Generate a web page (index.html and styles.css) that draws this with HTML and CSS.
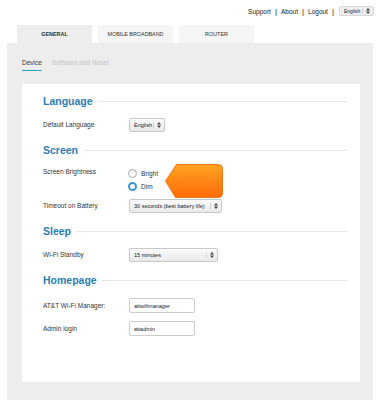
FILE: index.html
```html
<!DOCTYPE html>
<html>

<head>
  <meta charset="utf-8" />
  <title>Settings - General</title>
  <link rel="stylesheet" href="styles.css">
</head>

<body>
  <div class="top-links">
    <a href="#">Support</a><span class="sep">|</span>
    <a href="#">About</a><span class="sep">|</span>
    <a href="#">Logout</a><span class="sep">|</span>
    <span class="select lang-select">English
      <svg class="arrows" width="4" height="6" viewBox="0 0 4 6"><path d="M2 0L4 2.4H0z M2 6L4 3.6H0z" fill="#444"/></svg>
    </span>
  </div>

  <div class="tabs">
    <a class="tab active" href="#">GENERAL</a>
    <a class="tab" href="#">MOBILE BROADBAND</a>
    <a class="tab" href="#">ROUTER</a>
  </div>

  <div class="panel">
    <div class="subnav">
      <a class="subtab active" href="#">Device</a>
      <a class="subtab" href="#">Software and Reset</a>
    </div>

    <div class="card">
      <div class="section">
        <h2 class="section-title">Language</h2>
        <div class="row">
          <span class="label">Default Language</span>
          <span class="select w-lang">English
            <svg class="arrows" width="4" height="6" viewBox="0 0 4 6"><path d="M2 0L4 2.4H0z M2 6L4 3.6H0z" fill="#444"/></svg>
          </span>
        </div>
      </div>

      <div class="section">
        <h2 class="section-title">Screen</h2>
        <div class="row top">
          <span class="label">Screen Brightness</span>
          <div class="radios">
            <label class="radio"><span class="dot"></span>Bright</label>
            <label class="radio"><span class="dot on"></span>Dim</label>
          </div>
        </div>
        <div class="row tight">
          <span class="label">Timeout on Battery</span>
          <span class="select w-timeout">30 seconds (best battery life)
            <svg class="arrows" width="4" height="6" viewBox="0 0 4 6"><path d="M2 0L4 2.4H0z M2 6L4 3.6H0z" fill="#444"/></svg>
          </span>
        </div>
      </div>

      <div class="section">
        <h2 class="section-title">Sleep</h2>
        <div class="row">
          <span class="label">Wi-Fi Standby</span>
          <span class="select w-standby">15 minutes
            <svg class="arrows" width="4" height="6" viewBox="0 0 4 6"><path d="M2 0L4 2.4H0z M2 6L4 3.6H0z" fill="#444"/></svg>
          </span>
        </div>
      </div>

      <div class="section">
        <h2 class="section-title">Homepage</h2>
        <div class="row field">
          <span class="label">AT&amp;T Wi-Fi Manager:</span>
          <input class="text-input" type="text" value="attwifimanager">
        </div>
        <div class="row field">
          <span class="label">Admin login</span>
          <input class="text-input" type="text" value="attadmin">
        </div>
      </div>

      <svg class="pointer-tag" width="58" height="34" viewBox="0 0 58 34">
        <defs>
          <linearGradient id="tagfill" x1="0" y1="0" x2="0" y2="1">
            <stop offset="0" stop-color="#ffa424" />
            <stop offset="1" stop-color="#ff6a06" />
          </linearGradient>
        </defs>
        <path d="M11.5 0.5H53.5Q57.5 0.5 57.5 4.5V29.5Q57.5 33.5 53.5 33.5H10.5L0.5 17Z" fill="url(#tagfill)" stroke="#f07a1a" stroke-width="1" stroke-linejoin="round"/>
      </svg>
    </div>
  </div>
</body>

</html>
```

FILE: styles.css
```css
body {
  margin: 0;
  padding: 0;
  background-color: #ffffff;
  font-family: "Liberation Sans", Arial, sans-serif;
  color: #333333;
}

a {
  text-decoration: none;
  color: inherit;
}

.top-links {
  display: flex;
  justify-content: flex-end;
  align-items: center;
  height: 22px;
  padding-right: 6px;
  font-size: 6.5px;
  color: #222222;
}

.top-links .sep {
  margin: 0 4px;
  font-size: 8px;
}

.select {
  display: inline-flex;
  align-items: center;
  justify-content: space-between;
  box-sizing: border-box;
  height: 14px;
  padding: 0 3px 0 4px;
  border: 1px solid #c9c9c9;
  border-radius: 2px;
  background: linear-gradient(#fbfbfb, #e9e9e9);
  font-size: 5.5px;
  color: #222222;
  white-space: nowrap;
}

.select .arrows {
  padding-left: 3px;
  border-left: 1px solid #d6d6d6;
}

.lang-select {
  width: 35px;
  height: 10px;
  margin-left: 1px;
  font-size: 5px;
  background: #eeeeee;
  border-color: #d8d8d8;
}

.tabs {
  display: flex;
  gap: 6px;
  margin: 3px 0 0 17px;
}

.tab {
  display: flex;
  align-items: center;
  justify-content: center;
  width: 75px;
  height: 18px;
  background-color: #f5f5f5;
  font-size: 5.4px;
  color: #333333;
}

.tab.active {
  background-color: #ededed;
  font-weight: bold;
}

.panel {
  margin: 0 7px;
  height: 357px;
  background-color: #ededed;
  overflow: hidden;
}

.subnav {
  display: flex;
  gap: 10px;
  padding: 15px 15px 0;
  height: 13px;
}

.subtab {
  line-height: 10px;
  height: 10px;
  padding-bottom: 2px;
  font-size: 6.5px;
  color: #c4c4c4;
}

.subtab.active {
  color: #3a3a3a;
  border-bottom: 1px solid #2fa2bb;
}

.card {
  position: relative;
  box-sizing: border-box;
  height: 298px;
  margin: 13px 13px 0 15px;
  padding: 7px 13px 0 21px;
  background-color: #ffffff;
}

.section + .section {
  margin-top: 8px;
}

.section-title {
  display: flex;
  align-items: center;
  gap: 5px;
  height: 20px;
  margin: 0;
  font-size: 10.5px;
  font-weight: bold;
  color: #2a7db5;
}

.section-title::after {
  content: "";
  flex: 1;
  height: 1px;
  background-color: #e6e6e6;
}

.row {
  display: flex;
  align-items: center;
  margin-top: 7px;
}

.row.top {
  align-items: flex-start;
}

.row.tight {
  margin-top: 6px;
}

.row.field {
  margin-top: 8px;
}

.label {
  width: 86px;
  flex-shrink: 0;
  font-size: 6.5px;
  line-height: 10px;
  color: #333333;
}

.w-lang {
  width: 36px;
}

.w-timeout {
  width: 93px;
}

.w-standby {
  width: 89px;
}

.radios {
  display: flex;
  flex-direction: column;
  margin-left: -1px;
}

.radio {
  display: flex;
  align-items: center;
  height: 13px;
  font-size: 6.5px;
  color: #333333;
}

.dot {
  box-sizing: border-box;
  width: 9px;
  height: 9px;
  margin-right: 4px;
  border: 1px solid #a9a9a9;
  border-radius: 50%;
  background: linear-gradient(#f2f2f2, #ffffff);
}

.dot.on {
  border: 2.5px solid #3b94d6;
  background: #ffffff;
}

.text-input {
  box-sizing: border-box;
  width: 66px;
  height: 15px;
  margin: 0;
  padding: 0 4px;
  border: 1px solid #cccccc;
  border-radius: 2px;
  outline: none;
  font-family: "Liberation Sans", Arial, sans-serif;
  font-size: 5.5px;
  color: #222222;
}

.pointer-tag {
  position: absolute;
  left: 143px;
  top: 80px;
}
```
